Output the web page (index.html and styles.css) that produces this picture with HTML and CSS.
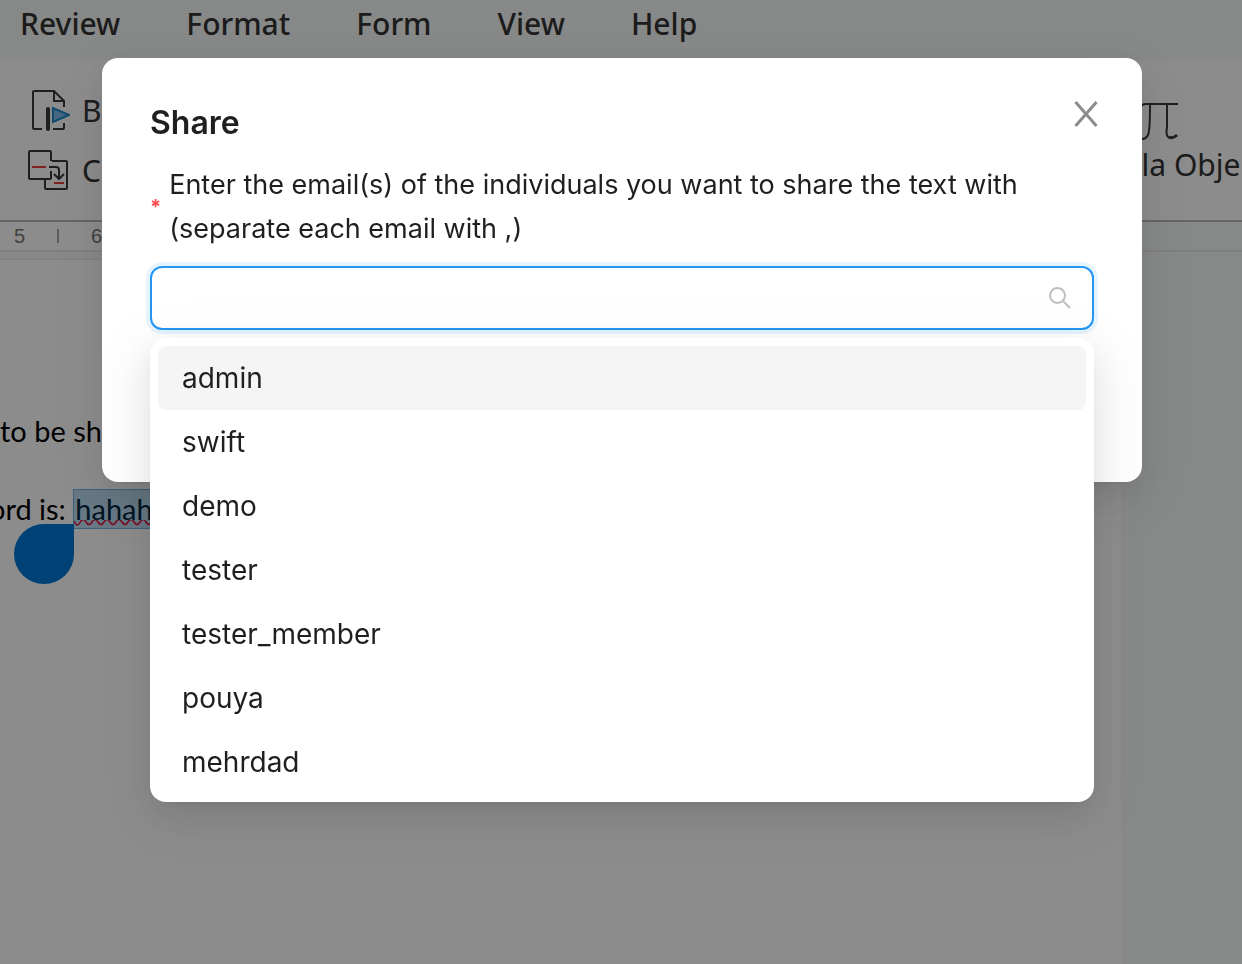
FILE: index.html
```html
<!DOCTYPE html>
<html lang="en">
<head>
  <meta charset="UTF-8">
  <meta name="viewport" content="width=device-width, initial-scale=1.0">
  <title>Share</title>
  <link rel="stylesheet" href="styles.css">
</head>
<body>
  <div class="editor">
    <nav class="menubar">
      <a href="#">Review</a>
      <a href="#">Format</a>
      <a href="#">Form</a>
      <a href="#">View</a>
      <a href="#">Help</a>
    </nav>

    <div class="toolbar">
      <div class="tool-column">
        <button class="tool" type="button">
          <svg width="42" height="42" viewBox="0 0 42 42" fill="none">
            <path d="M14 40H6q-1 0-1-1V3q0-1 1-1h20l10 10v6M36 34v5q0 1-1 1h-10" stroke="#3a3a38" stroke-width="2"/>
            <path d="M26 2v10h10" stroke="#3a3a38" stroke-width="2"/>
            <path d="M20 20v20" stroke="#3a3a38" stroke-width="4" stroke-linecap="round"/>
            <path d="M25 19v14l16-7z" fill="#83beec" stroke="#1e8bcd" stroke-width="2"/>
          </svg>
          <span>B</span>
        </button>
        <button class="tool" type="button">
          <svg width="42" height="42" viewBox="0 0 42 42" fill="none" stroke-width="2">
            <path d="M23 12V3q0-1-1-1H2q-1 0-1 1v26q0 1 1 1h20q1 0 1-1v-7" stroke="#3a3a38"/>
            <path d="M24 12h14q1 0 1 1v26q0 1-1 1H18q-1 0-1-1v-9" stroke="#3a3a38"/>
            <path d="M21 18h7q3 0 3 3v8M26 25l5 5 5-5" stroke="#3a3a38"/>
            <path d="M4 18h14M26 34h10" stroke="#ed3d3b"/>
          </svg>
          <span>C</span>
        </button>
      </div>
      <button class="tool-large" type="button">
        <svg width="48" height="40" viewBox="0 0 48 40" fill="none" stroke="#3a3a38">
          <path d="M4 6q2-3 6-3h32" stroke-width="2"/>
          <path d="M14 4q0 26-2 30-2 4-6 4" stroke-width="2"/>
          <path d="M31 4v22q-2 11 4 11" stroke-width="2"/>
          <path d="M33 36q4 2 8-2" stroke-width="3"/>
        </svg>
        <span>la Obje</span>
      </button>
    </div>

    <div class="ruler">
      <div class="ruler-scale">
        <span>5</span>
        <i class="tick"></i>
        <span>6</span>
      </div>
    </div>

    <div class="canvas">
      <div class="paper">
        <p>to be sh</p>
        <p class="cut">ord is: <span class="selection">hahah<svg class="squiggle" width="80" height="6" fill="none" stroke="#dc143c" stroke-width="1.5"><path d="M0 1q3 7 6 1.500t6-0.500q3 5 6 0t6 0q3 5 6 0t6 0q3 5 6 0t6 0q3 5 6 0t6 0q3 5 6 0t6 0q3 5 6 0"/></svg><i class="handle"></i></span></p>
      </div>
    </div>
  </div>

  <div class="mask">
    <div class="modal" role="dialog" aria-labelledby="modal-title">
      <div class="modal-header">
        <h2 id="modal-title">Share</h2>
        <button class="close" type="button" aria-label="Close">
          <svg width="24" height="26" viewBox="0 0 24 26" stroke="#8c8c8c" stroke-width="3">
            <path d="M1.500 1l21 24M22.500 1l-21 24"/>
          </svg>
        </button>
      </div>
      <label class="field-label" for="emails">
        <span class="required">*</span>
        <span>Enter the email(s) of the individuals you want to share the text with (separate each email with ,)</span>
      </label>
      <div class="select">
        <div class="select-box">
          <input type="text" id="emails" autocomplete="off">
          <svg width="24" height="24" viewBox="0 0 24 24" fill="none" stroke="#bfbfbf" stroke-width="2">
            <circle cx="9.500" cy="9.500" r="7.500"/>
            <path d="M15 15l7 7"/>
          </svg>
        </div>
        <ul class="dropdown" role="listbox">
          <li class="option active" role="option">admin</li>
          <li class="option" role="option">swift</li>
          <li class="option" role="option">demo</li>
          <li class="option" role="option">tester</li>
          <li class="option" role="option">tester_member</li>
          <li class="option" role="option">pouya</li>
          <li class="option" role="option">mehrdad</li>
        </ul>
      </div>
    </div>
  </div>
</body>
</html>
```

FILE: styles.css
```css
* {
  box-sizing: border-box;
}

body {
  margin: 0;
  overflow: hidden;
  font-family: Inter, "Liberation Sans", sans-serif;
  font-size: 28px;
  color: #1f1f1f;
}

button {
  padding: 0;
  border: none;
  background: none;
  color: inherit;
  font: inherit;
  cursor: pointer;
}

svg {
  display: block;
  flex: none;
}

/* editor behind the dialog */
.editor {
  display: flex;
  flex-direction: column;
  height: 100vh;
  background-color: #f6faf8;
  overflow: hidden;
}

.menubar {
  display: flex;
  gap: 66px;
  height: 60px;
  padding-left: 20px;
  font-family: "Noto Sans", sans-serif;
  font-size: 30px;
  font-weight: 500;
  line-height: 48px;
}

.menubar a {
  color: #333;
  text-decoration: none;
}

.toolbar {
  display: flex;
  justify-content: space-between;
  height: 162px;
  padding: 29px 0 0 28px;
  border-bottom: 2px solid #b4bab7;
  background-color: #fff;
  font-family: "Noto Sans", sans-serif;
  font-size: 30px;
  color: #333;
}

.tool-column {
  display: flex;
  flex-direction: column;
  gap: 18px;
}

.tool {
  display: flex;
  align-items: center;
  gap: 12px;
  height: 42px;
}

.tool-large {
  display: flex;
  flex-direction: column;
  align-self: flex-start;
  width: 102px;
  padding-top: 12px;
  line-height: 48px;
  white-space: nowrap;
}

.tool-large svg {
  margin-left: -4px;
}

.ruler {
  flex: none;
  height: 30px;
  border-bottom: 2px solid #e6e8e7;
}

.ruler-scale {
  display: flex;
  align-items: center;
  justify-content: space-between;
  width: 110px;
  height: 28px;
  padding: 0 8px 0 14px;
  background-color: #fff;
  font-family: "Liberation Sans", sans-serif;
  font-size: 20px;
  color: #777;
}

.tick {
  width: 2px;
  height: 14px;
  background-color: #aaa;
}

.canvas {
  flex: 1;
  padding: 6px 121px 0 0;
}

.paper {
  height: 100%;
  padding-top: 151px;
  border-top: 2px solid #eee;
  background-color: #fff;
  font-family: Lato, sans-serif;
  font-size: 29px;
  line-height: 40px;
  color: #000;
  white-space: nowrap;
}

.paper p {
  margin: 0 0 38px;
}

.paper .cut {
  margin-left: -11px;
}

.selection {
  position: relative;
  display: inline-block;
  height: 40px;
  padding: 0 20px 0 1px;
  border: 1px solid #6bb2e2;
  background-color: #bcdcf2;
  line-height: 38px;
  color: #00263f;
}

.squiggle {
  position: absolute;
  left: 0;
  bottom: 2px;
}

.handle {
  position: absolute;
  top: 34px;
  right: 100%;
  width: 60px;
  height: 60px;
  border-radius: 50% 0 50% 50%;
  background-color: #0078d7;
}

/* dialog */
.mask {
  position: fixed;
  inset: 0;
  padding: 58px 100px 0 102px;
  background-color: rgba(0, 0, 0, 0.45);
}

.modal {
  padding: 40px 48px 152px;
  border-radius: 16px;
  background-color: #fff;
  box-shadow: 0 12px 32px 0 rgba(0, 0, 0, 0.08),
    0 6px 12px -8px rgba(0, 0, 0, 0.12),
    0 18px 56px 16px rgba(0, 0, 0, 0.05);
}

.modal-header {
  display: flex;
  justify-content: space-between;
}

.modal-header h2 {
  margin: 0;
  font-size: 32px;
  font-weight: 600;
  line-height: 50px;
}

.close {
  height: 32px;
  margin-right: -4px;
}

.field-label {
  display: flex;
  align-items: center;
  gap: 8px;
  padding: 15px 0;
  font-size: 27px;
  line-height: 44px;
}

.required {
  font-size: 20px;
  font-weight: 700;
  line-height: 38px;
  color: #ff4d4f;
}

.select {
  position: relative;
}

.select-box {
  display: flex;
  align-items: center;
  height: 64px;
  padding: 0 20px;
  border: 2px solid #2396f7;
  border-radius: 12px;
  background-color: #fff;
  box-shadow: 0 0 0 4px #e6f4ff;
}

.select-box input {
  flex: 1;
  border: none;
  outline: none;
  background: none;
  font: inherit;
}

.dropdown {
  position: absolute;
  top: 100%;
  left: 0;
  right: 0;
  margin: 8px 0 0;
  padding: 8px;
  border-radius: 16px;
  background-color: #fff;
  box-shadow: 0 12px 32px 0 rgba(0, 0, 0, 0.08),
    0 6px 12px -8px rgba(0, 0, 0, 0.12),
    0 18px 56px 16px rgba(0, 0, 0, 0.05);
  list-style: none;
}

.option {
  padding: 10px 24px;
  border-radius: 8px;
  line-height: 44px;
}

.option.active {
  background-color: #f5f5f5;
}
```
